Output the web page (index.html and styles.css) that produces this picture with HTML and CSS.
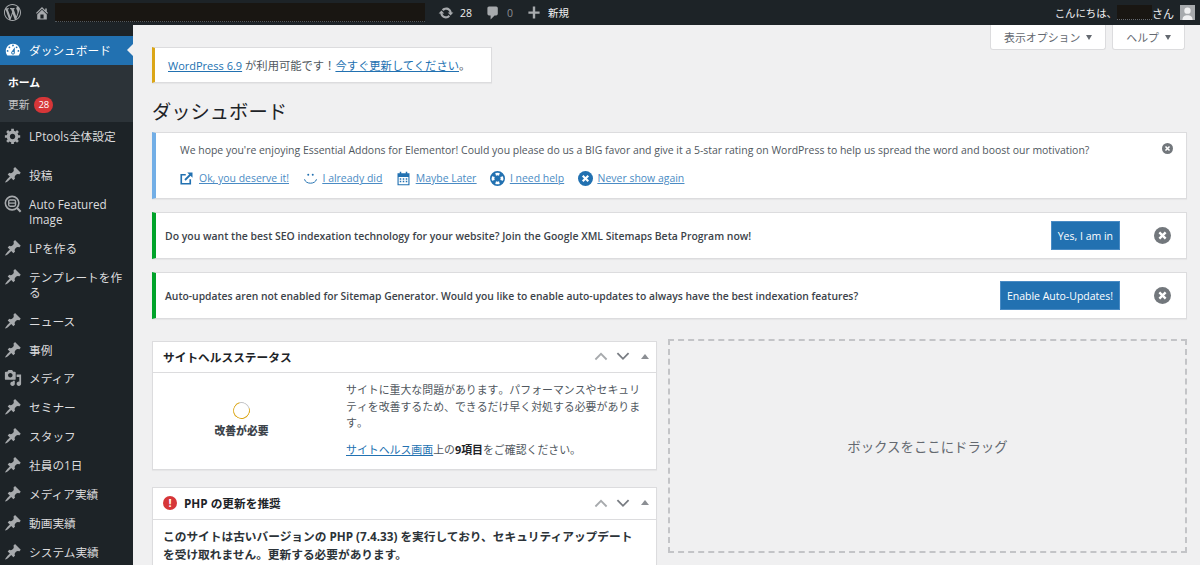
FILE: index.html
```html
<!DOCTYPE html>
<html lang="ja">

<head>
    <meta charset="UTF-8" />
    <title>ダッシュボード</title>
    <link rel="stylesheet" href="styles.css">
</head>

<body>
    <svg class="icon-defs" aria-hidden="true">
        <symbol id="i-wp" viewBox="0 0 20 20"><path d="M20 10c0-5.51-4.49-10-10-10C4.48 0 0 4.49 0 10c0 5.52 4.48 10 10 10 5.51 0 10-4.48 10-10zM7.78 15.37L4.37 6.22c.55-.02 1.17-.08 1.17-.08.5-.06.44-1.13-.06-1.11 0 0-1.45.11-2.37.11-.18 0-.37 0-.58-.01C4.12 2.69 6.87 1.11 10 1.11c2.33 0 4.45.87 6.05 2.34-.68-.11-1.65.39-1.65 1.58 0 .74.45 1.36.9 2.1.35.61.55 1.36.55 2.46 0 1.49-1.4 5-1.4 5l-3.03-8.37c.54-.02.82-.17.82-.17.5-.05.44-1.25-.06-1.22 0 0-1.44.12-2.38.12-.87 0-2.33-.12-2.33-.12-.5-.03-.56 1.2-.06 1.22l.92.08 1.26 3.41zM17.41 10c.24-.64.74-1.87.43-4.25.7 1.29 1.05 2.71 1.05 4.25 0 3.29-1.73 6.24-4.4 7.78.97-2.59 1.94-5.2 2.92-7.78zM6.1 18.09C3.12 16.65 1.11 13.53 1.11 10c0-1.3.23-2.48.72-3.59C3.25 10.3 4.67 14.2 6.1 18.09zm4.03-6.63l2.58 6.98c-.86.29-1.76.45-2.71.45-.79 0-1.57-.11-2.29-.33.81-2.38 1.62-4.74 2.42-7.1z"/></symbol>
        <symbol id="i-home" viewBox="0 0 20 20"><path d="M16 8.5l1.53 1.53-1.06 1.06L10 4.62l-6.47 6.47-1.06-1.06L10 2.5l4 4v-2h2v4zm-6-2.46l6 5.99V18H4v-5.97zM12 17v-5H8v5h4z"/></symbol>
        <symbol id="i-update" viewBox="0 0 20 20"><path d="M10.2 3.28c3.53 0 6.43 2.61 6.92 6h2.08l-3.5 4-3.5-4h2.32c-.45-1.97-2.21-3.45-4.32-3.45-1.45 0-2.73.71-3.54 1.78L4.95 5.66C6.23 4.2 8.11 3.28 10.2 3.28zm-.4 13.44c-3.52 0-6.43-2.61-6.92-6H.8l3.5-4c1.17 1.33 2.33 2.67 3.5 4H5.48c.45 1.97 2.21 3.45 4.32 3.45 1.45 0 2.73-.71 3.54-1.78l1.71 1.95c-1.28 1.46-3.15 2.38-5.25 2.38z"/></symbol>
        <symbol id="i-comment" viewBox="0 0 20 20"><path d="M5 2h9c1.1 0 2 .9 2 2v7c0 1.1-.9 2-2 2h-2l-5 5v-5H5c-1.1 0-2-.9-2-2V4c0-1.1.9-2 2-2z"/></symbol>
        <symbol id="i-plus" viewBox="0 0 20 20"><path d="M17 8v3h-5.500v6h-3v-6H3V8h5.500V2h3v6z"/></symbol>
        <symbol id="i-dash" viewBox="0 0 20 20"><path d="M3.76 16h12.48c1.1-1.37 1.76-3.11 1.76-5 0-4.42-3.58-8-8-8s-8 3.58-8 8c0 1.89.66 3.63 1.76 5zM10 4c.55 0 1 .45 1 1s-.45 1-1 1-1-.45-1-1 .45-1 1-1zM6 6c.55 0 1 .45 1 1s-.45 1-1 1-1-.45-1-1 .45-1 1-1zm8 0c.55 0 1 .45 1 1s-.45 1-1 1-1-.45-1-1 .45-1 1-1zm-5.37 5.55L12 7v6c0 1.1-.9 2-2 2s-2-.9-2-2c0-.57.24-1.08.63-1.45zM4 10c.55 0 1 .45 1 1s-.45 1-1 1-1-.45-1-1 .45-1 1-1zm12 0c.55 0 1 .45 1 1s-.45 1-1 1-1-.45-1-1 .45-1 1-1zm-5 3c0-.55-.45-1-1-1s-1 .45-1 1 .45 1 1 1 1-.45 1-1z"/></symbol>
        <symbol id="i-gear" viewBox="0 0 20 20"><path d="M18 12h-2.18c-.17.7-.44 1.35-.81 1.93l1.54 1.54-2.1 2.1-1.54-1.54c-.58.36-1.23.63-1.91.79V19H8v-2.18c-.68-.16-1.33-.43-1.91-.79l-1.54 1.54-2.12-2.12 1.54-1.54c-.36-.58-.63-1.23-.79-1.91H1V9.03h2.17c.16-.7.44-1.35.8-1.94L2.43 5.55l2.1-2.1 1.54 1.54c.58-.37 1.24-.64 1.93-.81V2h3v2.18c.68.16 1.33.43 1.91.79l1.54-1.54 2.12 2.12-1.54 1.54c.36.59.64 1.24.8 1.94H18V12zm-8.5 1.5c1.66 0 3-1.34 3-3s-1.34-3-3-3-3 1.34-3 3 1.34 3 3 3z"/></symbol>
        <symbol id="i-pin" viewBox="0 0 20 20"><path d="M10.44 3.02l1.82-1.82 6.36 6.35-1.83 1.82c-1.05-.68-2.48-.57-3.41.36l-.75.75c-.92.93-1.04 2.35-.35 3.41l-1.83 1.82-2.41-2.41-2.8 2.79c-.42.42-3.38 2.71-3.8 2.29s1.86-3.39 2.28-3.81l2.79-2.79L4.1 9.36l1.83-1.82c1.05.69 2.48.57 3.4-.36l.75-.75c.93-.92 1.05-2.35.36-3.41z"/></symbol>
        <symbol id="i-media" viewBox="0 0 20 20"><path d="M13 11V4c0-.55-.45-1-1-1h-1.67L9 1H5L3.67 3H2c-.55 0-1 .45-1 1v7c0 .55.45 1 1 1h10c.55 0 1-.45 1-1zM7 4.500c1.38 0 2.500 1.12 2.500 2.500S8.380 9.500 7 9.500 4.500 8.380 4.500 7 5.620 4.500 7 4.500zM14 6h5v10.500c0 1.38-1.12 2.500-2.500 2.500S14 17.880 14 16.500s1.120-2.500 2.500-2.500c.17 0 .34.02.5.05V9h-3V6zm-4 8.050V13h2v3.500c0 1.38-1.12 2.500-2.500 2.500S7 17.880 7 16.500 8.120 14 9.500 14c.17 0 .34.02.5.05z"/></symbol>
        <symbol id="i-search" viewBox="0 0 20 20"><circle cx="9" cy="9" r="7.500" fill="none" stroke="currentColor" stroke-width="1.800"/><rect x="5.200" y="5.600" width="7.600" height="6.800" rx="1.600" fill="none" stroke="currentColor" stroke-width="1.600"/><path d="M5.500 9h7" stroke="currentColor" stroke-width="1.400"/><path d="M14.500 14.500l4 4" stroke="currentColor" stroke-width="2.400"/></symbol>
        <symbol id="i-x" viewBox="0 0 20 20"><circle cx="10" cy="10" r="10"/><path d="M6.300 6.300l7.400 7.400M13.700 6.300l-7.400 7.400" stroke="#fff" stroke-width="2.800"/></symbol>
        <symbol id="i-chev-up" viewBox="0 0 20 20"><path d="M2 15l8-8 8 8" fill="none" stroke="currentColor" stroke-width="2.600"/></symbol>
        <symbol id="i-chev-down" viewBox="0 0 20 20"><path d="M2 6l8 8 8-8" fill="none" stroke="currentColor" stroke-width="2.600"/></symbol>
    </svg>

    <header class="admin-bar">
        <div class="bar-left">
            <svg class="bar-logo"><use href="#i-wp" /></svg>
            <svg class="bar-home"><use href="#i-home" /></svg>
            <!-- site name is blacked out in the capture -->
            <div class="redacted"></div>
            <span class="bar-item"><svg class="bar-icon"><use href="#i-update" /></svg>28</span>
            <span class="bar-item bar-muted"><svg class="bar-icon"><use href="#i-comment" /></svg>0</span>
            <span class="bar-item"><svg class="bar-icon"><use href="#i-plus" /></svg>新規</span>
        </div>
        <div class="bar-right">
            <span class="hello">こんにちは、</span>
            <div class="redacted-name"></div>
            <span>さん</span>
            <div class="avatar">
                <svg viewBox="0 0 16 16"><circle cx="8" cy="6" r="3.400" /><path d="M2.500 16c.5-4 2.500-5 5.500-5s5 1 5.500 5z" /></svg>
            </div>
        </div>
    </header>

    <div class="wrap">
        <nav class="sidebar">
            <a class="menu-item current" href="#"><svg><use href="#i-dash" /></svg><span>ダッシュボード</span></a>
            <div class="submenu">
                <a class="sub-home" href="#">ホーム</a>
                <a href="#">更新 <span class="count">28</span></a>
            </div>
            <a class="menu-item" href="#"><svg><use href="#i-gear" /></svg><span>LPtools全体設定</span></a>
            <div class="separator"></div>
            <a class="menu-item" href="#"><svg><use href="#i-pin" /></svg><span>投稿</span></a>
            <a class="menu-item" href="#"><svg><use href="#i-search" /></svg><span>Auto Featured Image</span></a>
            <a class="menu-item" href="#"><svg><use href="#i-pin" /></svg><span>LPを作る</span></a>
            <a class="menu-item" href="#"><svg><use href="#i-pin" /></svg><span>テンプレートを作る</span></a>
            <a class="menu-item" href="#"><svg><use href="#i-pin" /></svg><span>ニュース</span></a>
            <a class="menu-item" href="#"><svg><use href="#i-pin" /></svg><span>事例</span></a>
            <a class="menu-item" href="#"><svg><use href="#i-media" /></svg><span>メディア</span></a>
            <a class="menu-item" href="#"><svg><use href="#i-pin" /></svg><span>セミナー</span></a>
            <a class="menu-item" href="#"><svg><use href="#i-pin" /></svg><span>スタッフ</span></a>
            <a class="menu-item" href="#"><svg><use href="#i-pin" /></svg><span>社員の1日</span></a>
            <a class="menu-item" href="#"><svg><use href="#i-pin" /></svg><span>メディア実績</span></a>
            <a class="menu-item" href="#"><svg><use href="#i-pin" /></svg><span>動画実績</span></a>
            <a class="menu-item" href="#"><svg><use href="#i-pin" /></svg><span>システム実績</span></a>
        </nav>

        <main class="content">
            <div class="screen-meta">
                <button class="meta-btn">表示オプション<i class="caret"></i></button>
                <button class="meta-btn">ヘルプ<i class="caret"></i></button>
            </div>

            <div class="notice notice-update">
                <a class="wp-version" href="#">WordPress 6.9</a> が利用可能です！<a href="#">今すぐ更新してください</a>。
            </div>

            <h1>ダッシュボード</h1>

            <div class="notice notice-rate">
                <p>We hope you're enjoying Essential Addons for Elementor! Could you please do us a BIG favor and give it a 5-star rating on WordPress to help us spread the word and boost our motivation?</p>
                <svg class="rate-close"><use href="#i-x" /></svg>
                <div class="rate-links">
                    <a href="#">
                        <svg viewBox="0 0 20 20" class="rate-icon"><path d="M15 11v6H3V5h6" fill="none" stroke="currentColor" stroke-width="2.200" /><path d="M8 12l8-8" stroke="currentColor" stroke-width="2.400" /><path d="M11 2h7v7z" /></svg>
                        <span>Ok, you deserve it!</span>
                    </a>
                    <a href="#">
                        <svg viewBox="0 0 20 20" class="rate-icon"><circle cx="7" cy="5" r="1.300" /><circle cx="13" cy="5" r="1.300" /><path d="M2 11c1.500 7 14.500 7 16 0" fill="none" stroke="currentColor" stroke-width="1.300" /></svg>
                        <span>I already did</span>
                    </a>
                    <a href="#">
                        <svg viewBox="0 0 20 20" class="rate-icon"><path fill-rule="evenodd" d="M2 3h3V1h2v2h6V1h2v2h3v16H2zm1.500 5v9.500h13V8z" /><path d="M5 9.500h2v2H5zm4 0h2v2H9zm4 0h2v2h-2zm-8 3.500h2v2H5zm4 0h2v2H9zm4 0h2v2h-2z" /></svg>
                        <span>Maybe Later</span>
                    </a>
                    <a href="#">
                        <svg viewBox="0 0 20 20" class="rate-icon"><path fill-rule="evenodd" d="M10 0a10 10 0 1 0 0 20 10 10 0 0 0 0-20zM7 2.800a8 8 0 0 1 6 0L12 6.300a4 4 0 0 0-4 0zM2.800 7l3.500 1a4 4 0 0 0 0 4l-3.500 1a8 8 0 0 1 0-6zm14.400 0a8 8 0 0 1 0 6l-3.500-1a4 4 0 0 0 0-4zM8 13.700a4 4 0 0 0 4 0l1 3.500a8 8 0 0 1-6 0z" /></svg>
                        <span>I need help</span>
                    </a>
                    <a href="#">
                        <svg class="rate-icon"><use href="#i-x" /></svg>
                        <span>Never show again</span>
                    </a>
                </div>
            </div>

            <div class="notice notice-action">
                <p>Do you want the best SEO indexation technology for your website? Join the Google XML Sitemaps Beta Program now!</p>
                <button class="blue-btn">Yes, I am in</button>
                <svg class="action-close"><use href="#i-x" /></svg>
            </div>

            <div class="notice notice-action notice-tight">
                <p>Auto-updates aren not enabled for Sitemap Generator. Would you like to enable auto-updates to always have the best indexation features?</p>
                <button class="blue-btn">Enable Auto-Updates!</button>
                <svg class="action-close"><use href="#i-x" /></svg>
            </div>

            <div class="boxes">
                <div class="box-col">
                    <section class="postbox">
                        <div class="box-head">
                            <h2>サイトヘルスステータス</h2>
                            <div class="box-controls">
                                <svg><use href="#i-chev-up" /></svg>
                                <svg><use href="#i-chev-down" /></svg>
                                <i class="box-toggle"></i>
                            </div>
                        </div>
                        <div class="health-body">
                            <div class="health-status">
                                <div class="health-ring"></div>
                                <strong>改善が必要</strong>
                            </div>
                            <div class="health-text">
                                <p>サイトに重大な問題があります。パフォーマンスやセキュリティを改善するため、できるだけ早く対処する必要があります。</p>
                                <p><a href="#">サイトヘルス画面</a>上の<b>9項目</b>をご確認ください。</p>
                            </div>
                        </div>
                    </section>

                    <section class="postbox">
                        <div class="box-head">
                            <h2 class="php-title"><span class="alert-dot">!</span>PHP の更新を推奨</h2>
                            <div class="box-controls">
                                <svg><use href="#i-chev-up" /></svg>
                                <svg><use href="#i-chev-down" /></svg>
                                <i class="box-toggle"></i>
                            </div>
                        </div>
                        <div class="php-body">
                            <p>このサイトは古いバージョンの PHP (7.4.33) を実行しており、セキュリティアップデートを受け取れません。更新する必要があります。</p>
                        </div>
                    </section>
                </div>

                <div class="dropzone">ボックスをここにドラッグ</div>
            </div>
        </main>
    </div>
</body>

</html>
```

FILE: styles.css
```css
* {
    margin: 0;
    padding: 0;
    box-sizing: border-box;
}

html,
body {
    height: 100%;
    overflow: hidden;
}

body {
    background-color: #f0f0f1;
    font-family: 'Open Sans', 'Noto Sans CJK JP', sans-serif;
    font-size: 11px;
    color: #3c434a;
    display: flex;
    flex-direction: column;
}

a {
    color: #2271b1;
}

.icon-defs {
    display: none;
}

/* Admin bar */
.admin-bar {
    height: 25px;
    flex-shrink: 0;
    background-color: #1d2327;
    color: #f0f0f1;
    display: flex;
    justify-content: space-between;
    align-items: center;
    font-size: 10.5px;
}

.bar-left,
.bar-right,
.bar-item {
    display: flex;
    align-items: center;
}

.bar-logo {
    width: 17px;
    height: 17px;
    margin-left: 4px;
    fill: #a7aaad;
}

.bar-home {
    width: 16px;
    height: 16px;
    margin-left: 13px;
    fill: #a7aaad;
}

.redacted {
    width: 370px;
    height: 19px;
    margin: 0 13px 0 5px;
    background-color: #191612;
    border-bottom: 1px dotted #50575e;
}

.bar-item {
    gap: 6px;
    margin-right: 13px;
}

.bar-icon {
    width: 16px;
    height: 16px;
    fill: #a7aaad;
}

.bar-muted {
    color: #8c8f94;
}

.bar-right {
    font-size: 11px;
    margin-right: 5px;
}

.hello {
    font-size: 10.4px;
}

.redacted-name {
    width: 35px;
    height: 15px;
    background-color: #191612;
    border-bottom: 1px dotted #646970;
}

.avatar {
    width: 15px;
    height: 15px;
    margin-left: 6px;
    background-color: #a7aaad;
}

.avatar svg {
    display: block;
    width: 15px;
    height: 15px;
    fill: #f0f0f1;
}

.wrap {
    flex: 1;
    display: flex;
    min-height: 0;
}

/* Sidebar */
.sidebar {
    width: 133px;
    flex-shrink: 0;
    background-color: #1d2327;
    padding-top: 11px;
    font-size: 11.7px;
}

.menu-item {
    display: flex;
    gap: 7px;
    padding: 6.95px 4px;
    line-height: 15px;
    color: #dcdcde;
    text-decoration: none;
    position: relative;
}

.menu-item svg {
    width: 18px;
    height: 18px;
    margin: -2px 0 -1px;
    flex-shrink: 0;
    fill: #a7aaad;
    color: #a7aaad;
}

.menu-item.current {
    background-color: #2271b1;
    color: #fff;
}

.menu-item.current svg {
    fill: #fff;
}

/* little arrow pointing at the content */
.menu-item.current::after {
    content: "";
    position: absolute;
    right: 0;
    top: 50%;
    margin-top: -6px;
    border: 6px solid transparent;
    border-right-color: #f0f0f1;
    border-left-width: 0;
}

.submenu {
    background-color: #2c3338;
    height: 57px;
    padding: 10px 8px 0;
    font-size: 10.8px;
}

.submenu a {
    display: block;
    height: 22px;
    line-height: 16px;
    color: #c3c4c7;
    text-decoration: none;
}

.submenu .sub-home {
    color: #fff;
    font-weight: 700;
}

.count {
    display: inline-block;
    min-width: 18px;
    height: 16px;
    margin-left: 2px;
    padding: 0 4px;
    border-radius: 8px;
    background-color: #d63638;
    color: #fff;
    font-size: 9.5px;
    line-height: 16px;
    text-align: center;
    vertical-align: top;
}

.separator {
    height: 10.5px;
}

/* Main column */
.content {
    flex: 1;
    min-width: 0;
    padding: 0 13px 0 19px;
}

.screen-meta {
    height: 22px;
    display: flex;
    justify-content: flex-end;
    gap: 6px;
    padding-right: 2px;
}

.meta-btn {
    height: 25px;
    padding: 0 13px;
    background-color: #fff;
    border: 1px solid #dcdcde;
    border-top: none;
    border-radius: 0 0 3px 3px;
    color: #646970;
    font-family: inherit;
    font-size: 10.9px;
    display: flex;
    align-items: center;
    gap: 6px;
}

.caret {
    border: 3.5px solid transparent;
    border-top: 5px solid #646970;
    border-bottom-width: 0;
}

.notice {
    background-color: #fff;
    border: 1px solid #dcdcde;
    border-left-width: 4px;
    box-shadow: 0 1px 1px rgba(0, 0, 0, 0.04);
}

.notice-update {
    width: 340px;
    height: 36px;
    border-left-width: 3px;
    border-left-color: #dba617;
    padding-left: 13px;
    font-size: 11.3px;
    line-height: 35px;
    white-space: nowrap;
    color: #50575e;
}

.wp-version {
    font-size: 11px;
}

h1 {
    font-size: 19.3px;
    font-weight: 400;
    line-height: 26px;
    color: #1d2327;
    margin: 16px 0 7px;
}

.notice-rate {
    height: 67px;
    border-left-color: #72aee6;
    padding: 9px 24px;
    position: relative;
    font-size: 10.46px;
    line-height: 16px;
    color: #50575e;
}

.rate-close {
    position: absolute;
    top: 10px;
    right: 13px;
    width: 11px;
    height: 11px;
    fill: #72777c;
}

.rate-links {
    display: flex;
    gap: 13.5px;
    margin: 12px 0 0 -1px;
}

.rate-links a {
    display: flex;
    align-items: center;
    gap: 5px;
    color: #4a8bc4;
}

.rate-links span {
    text-decoration: underline;
}

.rate-icon {
    width: 15px;
    height: 15px;
    fill: #2271b1;
    color: #2271b1;
}

.notice-action {
    height: 47px;
    margin-top: 13px;
    border-left-color: #00a32a;
    padding-left: 9px;
    display: flex;
    align-items: center;
    font-weight: 600;
    font-size: 10.45px;
    color: #3c434a;
}

.notice-action p {
    flex: 1;
}

.notice-tight p {
    font-size: 10.33px;
}

.blue-btn {
    height: 29px;
    padding: 0 6px;
    background-color: #2271b1;
    border: 1px solid #4a8bc4;
    color: #fff;
    font-family: inherit;
    font-size: 10.5px;
}

.action-close {
    width: 17px;
    height: 17px;
    margin: 0 15px 0 34px;
    fill: #72777c;
}

/* Dashboard boxes */
.boxes {
    display: grid;
    grid-template-columns: 505px 519px;
    gap: 11px;
    margin-top: 20px;
}

.box-col {
    padding-top: 2px;
    display: flex;
    flex-direction: column;
    gap: 17px;
}

.postbox {
    background-color: #fff;
    border: 1px solid #dcdcde;
    box-shadow: 0 1px 1px rgba(0, 0, 0, 0.04);
}

.box-head {
    height: 31px;
    padding: 0 7px 2px 10px;
    border-bottom: 1px solid #dcdcde;
    display: flex;
    justify-content: space-between;
    align-items: center;
}

.box-head h2 {
    font-size: 11.7px;
    font-weight: 700;
    color: #1d2327;
}

.box-controls {
    display: flex;
    align-items: center;
    gap: 8px;
    color: #a7aaad;
}

.box-controls svg {
    width: 14px;
    height: 14px;
}

.box-controls svg:nth-child(2) {
    color: #787c82;
}

.box-toggle {
    margin-left: 3px;
    border: 4.5px solid transparent;
    border-bottom: 5px solid #8c8f94;
    border-top-width: 0;
}

.health-body {
    height: 96px;
    display: flex;
    padding-top: 9px;
}

.health-status {
    width: 177px;
    padding-top: 20px;
    display: flex;
    flex-direction: column;
    align-items: center;
    gap: 3px;
    margin-right: 16px;
    font-size: 10.8px;
    font-weight: 700;
}

.health-ring {
    width: 17px;
    height: 17px;
    border-radius: 50%;
    border: 1.5px solid #dba617;
    border-top-color: #c3c4c7;
    transform: rotate(30deg);
}

.health-text {
    width: 300px;
    font-size: 10.9px;
    font-kerning: none;
    line-height: 16.6px;
    color: #50575e;
}

.health-text p + p {
    margin-top: 10px;
}

.health-text b {
    color: #1d2327;
}

.php-title {
    display: flex;
    align-items: center;
    gap: 7px;
}

.box-col .postbox:last-child .box-head {
    height: 32px;
}

.alert-dot {
    width: 14px;
    height: 14px;
    border-radius: 50%;
    background-color: #d63638;
    color: #fff;
    font-size: 11px;
    line-height: 14px;
    text-align: center;
}

.php-body {
    padding: 7px 20px 7px 10px;
    font-size: 11.7px;
    font-weight: 700;
    line-height: 18px;
    color: #2c3338;
}

.dropzone {
    height: 214px;
    border: 2px dashed #c3c4c7;
    display: flex;
    align-items: center;
    justify-content: center;
    font-size: 13.4px;
    color: #646970;
}
```
